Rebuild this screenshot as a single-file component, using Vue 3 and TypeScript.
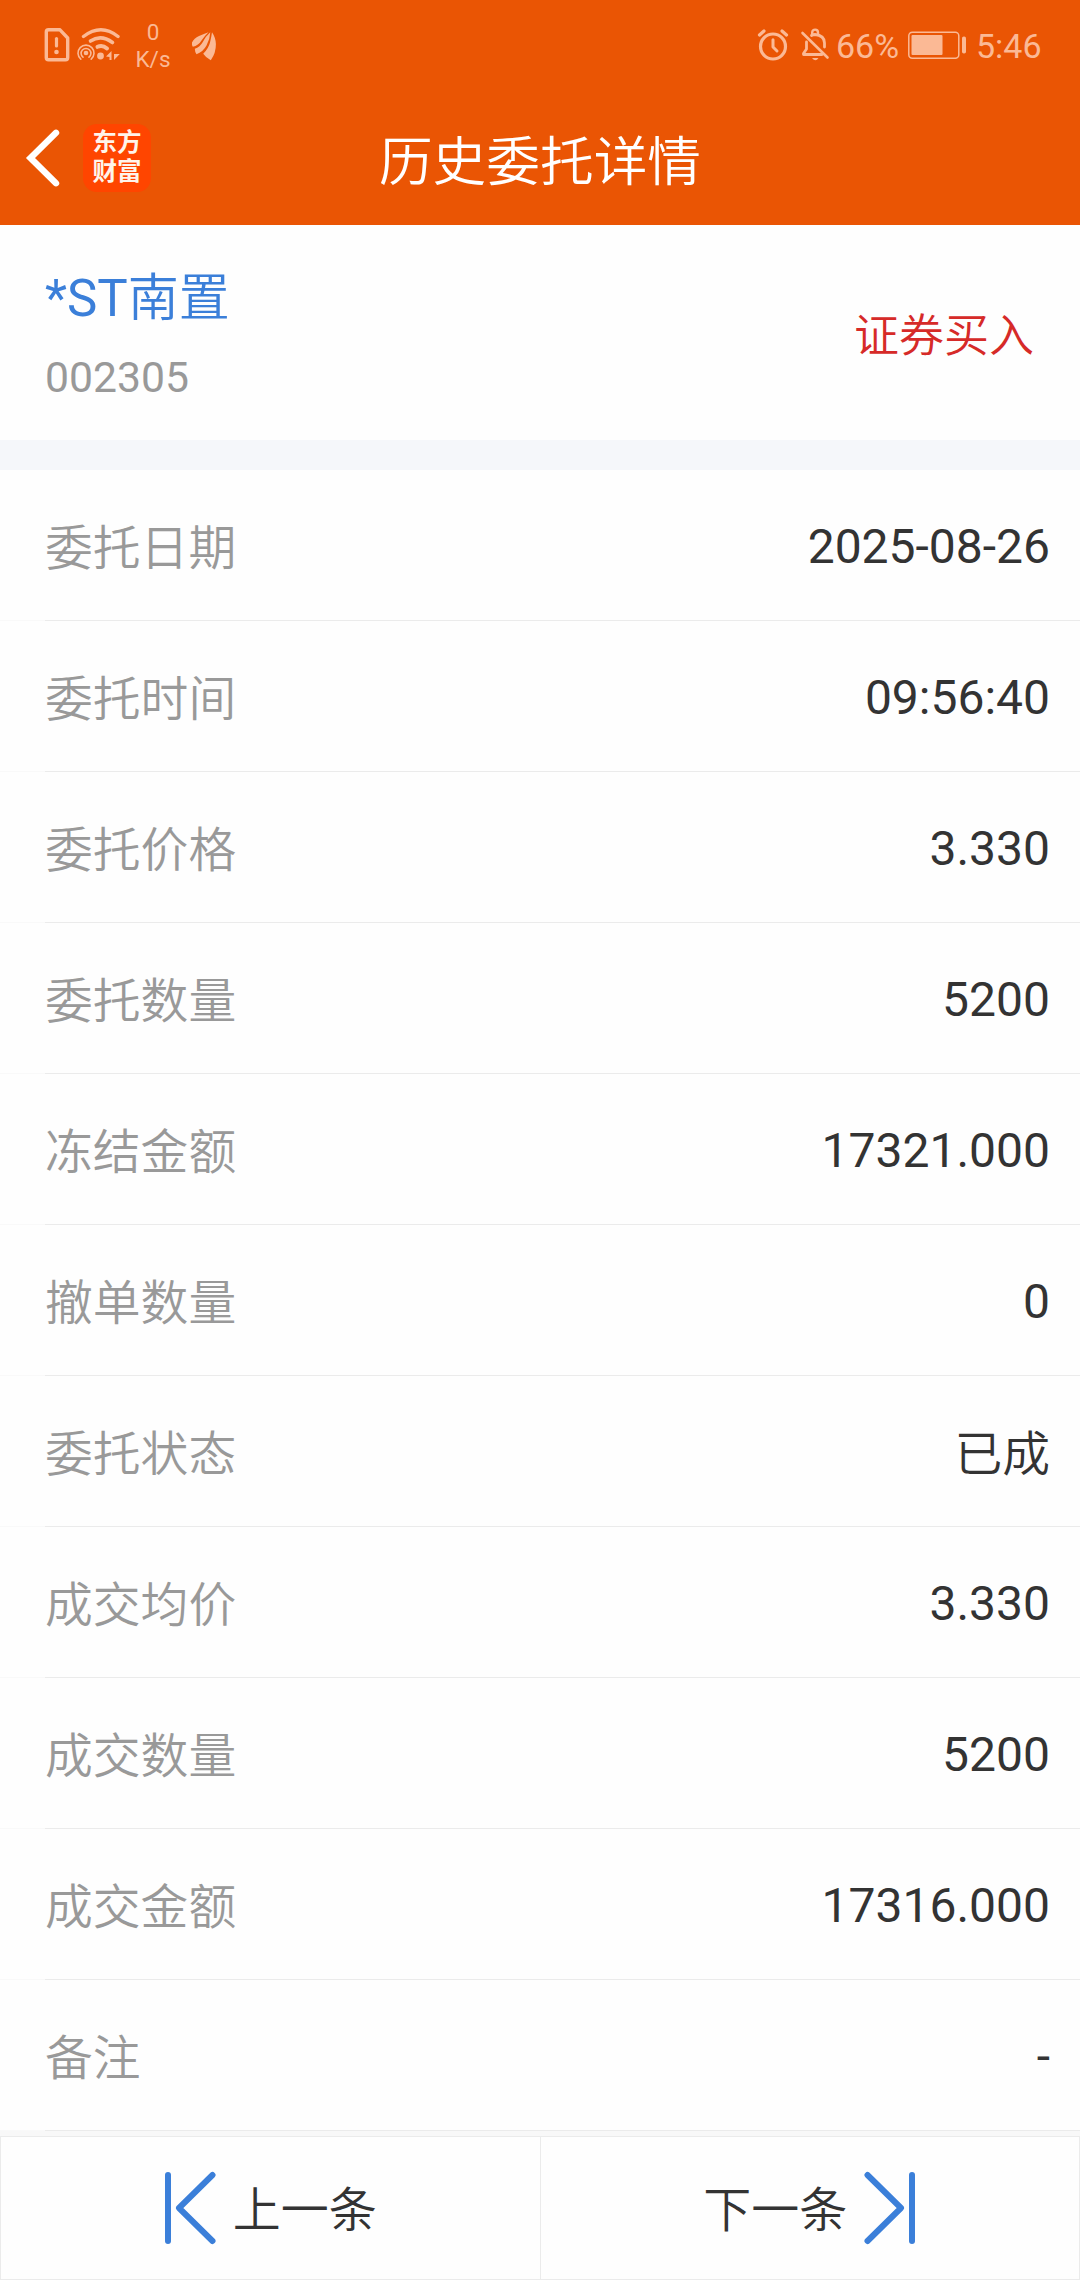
<script setup lang="ts">
interface DetailRow {
  label: string
  value: string
}

const rows: DetailRow[] = [
  { label: '委托日期', value: '2025-08-26' },
  { label: '委托时间', value: '09:56:40' },
  { label: '委托价格', value: '3.330' },
  { label: '委托数量', value: '5200' },
  { label: '冻结金额', value: '17321.000' },
  { label: '撤单数量', value: '0' },
  { label: '委托状态', value: '已成' },
  { label: '成交均价', value: '3.330' },
  { label: '成交数量', value: '5200' },
  { label: '成交金额', value: '17316.000' },
  { label: '备注', value: '-' },
]

const isHan = (text: string): boolean => /[\u4e00-\u9fff]/.test(text)
</script>

<template>
  <div class="page">
    <header class="top">
      <div class="status">
        <div class="status-left">
          <!-- SIM alert -->
          <svg class="sim" width="28" height="36" viewBox="43 27 28 36" fill="none" stroke="#fbb995">
            <path d="M48.5 29.8H60L67.7 38V57.5Q67.7 59.7 65.5 59.7H48.5Q46.3 59.7 46.3 57.5V32Q46.3 29.8 48.5 29.8Z" stroke-width="3.4" stroke-linejoin="round" />
            <path d="M56.5 38.5V46" stroke-width="3.2" stroke-linecap="round" />
            <circle cx="56.5" cy="52" r="2.3" fill="#fbb995" stroke="none" />
          </svg>
          <!-- Wi-Fi with hotspot -->
          <svg class="wifi" width="44" height="36" viewBox="77 27 44 36" fill="none" stroke="#fbb995" stroke-linecap="round">
            <path d="M83.5 36.5Q101 23 118 36.500" stroke-width="3.4" />
            <path d="M90.5 41Q101 34 112.5 42.5" stroke-width="3.6" />
            <path d="M97.5 46.8Q102.5 44.5 107 48.5" stroke-width="4" />
            <circle cx="100.5" cy="56" r="3.4" fill="#fbb995" stroke="none" />
            <circle cx="86" cy="53" r="2.3" fill="#fbb995" stroke="none" />
            <path d="M83 57.2A4.9 4.9 0 1 1 89 57.2" stroke-width="1.6" />
            <path d="M80.8 59.2A8 8 0 1 1 91.200 59.200" stroke-width="1.6" />
            <path d="M106 56.500L111.500 51V60H109.500V57ZM114 51V54H119.800L114 60Z" fill="#fbb995" stroke="none" />
          </svg>
          <div class="speed"><span>0</span><span>K/s</span></div>
          <svg class="leaf" width="28" height="32" viewBox="190 30 28 32" fill="#fbb995">
            <path d="M192 42.5Q194 38 199 36Q204 34 208.500 32.200Q204.500 36 201.500 40.500Q198.500 45.500 192.800 46.800Q191.600 44.800 192 42.500Z" />
            <path d="M210.300 32.300Q210 39 206.500 45.500Q203 52 196.500 54.200Q194.800 51.500 194.800 48.700Q200 47 202.800 42Q205.500 36.500 210.300 32.300Z" />
            <path d="M212 32.300Q215.600 37.500 215.900 44Q216 53 210.800 60.200Q206 58 203.200 53.800Q208.500 48.500 210 42.500Q211.300 37.500 212 32.300Z" />
          </svg>
        </div>
        <div class="status-right">
          <!-- Alarm -->
          <svg class="alarm" width="34" height="36" viewBox="756 27 34 36" fill="none" stroke="#fbb995" stroke-linecap="round">
            <circle cx="773" cy="46.5" r="12.5" stroke-width="3.2" />
            <path d="M773 39.8V47L777 51" stroke-width="3" stroke-linejoin="round" />
            <path d="M759.5 35L764 31M786.5 35L782 31" stroke-width="3.2" />
          </svg>
          <!-- Muted bell -->
          <svg class="bell" width="30" height="36" viewBox="800 27 30 36" fill="none" stroke="#fbb995" stroke-linecap="round" stroke-linejoin="round">
            <path d="M806.5 42V49L803.5 53.5V54.5H822" stroke-width="2.8" />
            <path d="M811.5 35.5Q813 34.5 815 34.5Q824.5 35.5 824.5 43V47" stroke-width="2.8" />
            <path d="M812.2 34V32.5A2.9 2.9 0 0 1 818 32.5V34" stroke-width="2.4" />
            <path d="M802.5 33L827.5 57.5" stroke-width="2.6" />
            <path d="M812 58H818.5Q815.5 62.5 812 58Z" fill="#fbb995" stroke="none" />
          </svg>
          <span class="percent">66%</span>
          <svg class="battery" width="60" height="30" viewBox="907 30.500 60 30" fill="none">
            <rect x="908.8" y="32.7" width="50" height="26" rx="3.5" stroke="#fbb995" stroke-width="1.5" />
            <rect x="911.5" y="35.5" width="31" height="20" rx="1" fill="#fbb995" />
            <rect x="962" y="37" width="4" height="17" rx="1.8" fill="#fbb995" />
          </svg>
          <span class="clock">5:46</span>
        </div>
      </div>
      <div class="nav">
        <div class="nav-left">
          <svg width="36" height="60" viewBox="25 127.500 36 60" fill="none">
            <path d="M56 132.3L30.5 157.5L56 182.7" stroke="#fff" stroke-width="6.4" stroke-linecap="round" />
          </svg>
          <div class="logo"><span>东方</span><span>财富</span></div>
        </div>
        <h1 class="title">历史委托详情</h1>
      </div>
    </header>

    <section class="stock">
      <div>
        <div class="name"><span class="latin">*ST</span>南置</div>
        <div class="code">002305</div>
      </div>
      <div class="side">证券买入</div>
    </section>

    <ul class="rows">
      <li v-for="row in rows" :key="row.label" class="row">
        <span class="label">{{ row.label }}</span>
        <span class="value" :class="{ han: isHan(row.value) }">{{ row.value }}</span>
      </li>
    </ul>

    <footer class="pager">
      <div class="btn prev">
        <svg width="52" height="74" viewBox="0 0 52 74" fill="none" stroke="#3b7fd9" stroke-linecap="round" stroke-linejoin="round">
          <path d="M4 4V70" stroke-width="6" />
          <path d="M48.5 4L15 37L48.5 70" stroke-width="6" />
        </svg>
        <span>上一条</span>
      </div>
      <div class="btn next">
        <span>下一条</span>
        <svg width="52" height="74" viewBox="0 0 52 74" fill="none" stroke="#3b7fd9" stroke-linecap="round" stroke-linejoin="round">
          <path d="M48 4V70" stroke-width="6" />
          <path d="M3.5 4L37 37L3.5 70" stroke-width="6" />
        </svg>
      </div>
    </footer>
  </div>
</template>

<style>
body {
  margin: 0;
  background: #f8f8f8;
}
</style>

<style scoped>
.page {
  width: 1080px;
  height: 2280px;
  display: flex;
  flex-direction: column;
  background: #f8f8f8;
  font-family: Roboto, 'Noto Sans CJK SC', sans-serif;
  overflow: hidden;
}
svg {
  display: block;
  flex: none;
}
.top {
  height: 225px;
  flex: none;
  background: #ea5504;
}
.status {
  height: 90px;
  display: flex;
  justify-content: space-between;
  color: #fbb995;
}
.status-left {
  display: flex;
  align-items: center;
  padding-left: 43px;
}
.wifi {
  margin-left: 6px;
}
.speed {
  width: 40px;
  margin: 1px 0 0 12px;
  display: flex;
  flex-direction: column;
  align-items: center;
  font-size: 22.5px;
  line-height: 27px;
}
.leaf {
  margin: 2px 0 0 17px;
}
.status-right {
  display: flex;
  align-items: center;
  padding-right: 39px;
  font-size: 34px;
  font-weight: 370;
}
.bell {
  margin-left: 10px;
}
.percent {
  width: 71px;
  margin-left: 6px;
  line-height: 40px;
  padding-top: 2px;
}
.clock {
  width: 65px;
  margin-left: 9px;
  line-height: 40px;
  padding-top: 2px;
}
.nav {
  height: 135px;
  display: grid;
  grid-template-columns: 1fr auto 1fr;
  align-items: center;
}
.nav-left {
  display: flex;
  align-items: center;
  padding-left: 25px;
}
.logo {
  width: 68px;
  height: 68px;
  margin-left: 22px;
  border-radius: 14px;
  background: #ff4500;
  color: #fff4ea;
  display: flex;
  flex-direction: column;
  align-items: center;
  box-sizing: border-box;
  padding-top: 2px;
  font: 700 24.5px/29px 'Noto Sans CJK SC', sans-serif;
}
.title {
  margin: 1px 0 0;
  color: #fff;
  font: 350 53.7px/80px 'Noto Sans CJK SC', sans-serif;
}
.stock {
  height: 215px;
  flex: none;
  box-sizing: border-box;
  padding: 37px 46px 0 45px;
  display: flex;
  justify-content: space-between;
  background: #fefefe;
}
.name {
  font-size: 51px;
  line-height: 73px;
  font-weight: 350;
  color: #3b7fd9;
}
.latin {
  font-weight: 400;
}
.code {
  margin-top: 11px;
  font-size: 42.7px;
  line-height: 62px;
  color: #999;
  font-weight: 370;
}
.side {
  margin-top: 39px;
  font-size: 45px;
  line-height: 72px;
  font-weight: 350;
  color: #d62a28;
}
.rows {
  margin: 0;
  padding: 0;
  list-style: none;
  flex: none;
  border-top: 30px solid #f5f7fa;
}
.row {
  height: 151px;
  box-sizing: border-box;
  padding: 2px 30px 0 45px;
  display: flex;
  align-items: center;
  justify-content: space-between;
  background: linear-gradient(90deg, #f9f9f9 45px, #ebebeb 45px) left bottom / 100% 1px no-repeat, #fefefe;
  font-size: 48px;
  line-height: 72px;
}
.label {
  color: #999;
  font-size: 47.8px;
  font-weight: 350;
  padding-top: 4px;
}
.value {
  color: #333;
  font-weight: 370;
}
.han {
  font-size: 47.8px;
  font-weight: 350;
  padding-top: 4px;
}
.pager {
  height: 144px;
  flex: none;
  margin-top: 5px;
  box-sizing: border-box;
  display: flex;
  border: 1px solid #ebebeb;
  background: #fefefe;
}
.btn {
  flex: 1;
  display: flex;
  align-items: center;
  justify-content: center;
  gap: 17px;
  color: #333;
  font-size: 48px;
  line-height: 72px;
  font-weight: 350;
}
.btn span {
  padding-top: 6px;
}
.prev {
  border-right: 1px solid #ebebeb;
}
</style>
